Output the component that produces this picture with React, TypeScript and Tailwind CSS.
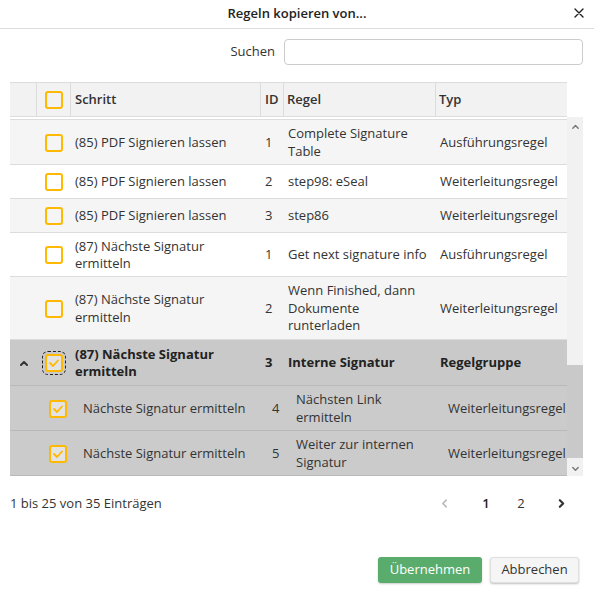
import React from 'react';

type Row = {
  step: string[];
  id: string;
  rule: string[];
  type: string;
  h: string;
  bg: string;
  kind: 'plain' | 'group' | 'child';
  checked?: boolean;
};

const rows: Row[] = [
  { step: ['(85) PDF Signieren lassen'], id: '1', rule: ['Complete Signature', 'Table'], type: 'Ausführungsregel', h: 'h-[45px]', bg: 'bg-[#f5f5f5]', kind: 'plain' },
  { step: ['(85) PDF Signieren lassen'], id: '2', rule: ['step98: eSeal'], type: 'Weiterleitungsregel', h: 'h-[34px]', bg: 'bg-white', kind: 'plain' },
  { step: ['(85) PDF Signieren lassen'], id: '3', rule: ['step86'], type: 'Weiterleitungsregel', h: 'h-[34px]', bg: 'bg-[#f5f5f5]', kind: 'plain' },
  { step: ['(87) Nächste Signatur', 'ermitteln'], id: '1', rule: ['Get next signature info'], type: 'Ausführungsregel', h: 'h-[44px]', bg: 'bg-white', kind: 'plain' },
  { step: ['(87) Nächste Signatur', 'ermitteln'], id: '2', rule: ['Wenn Finished, dann', 'Dokumente', 'runterladen'], type: 'Weiterleitungsregel', h: 'h-[63px]', bg: 'bg-[#f5f5f5]', kind: 'plain' },
  { step: ['(87) Nächste Signatur', 'ermitteln'], id: '3', rule: ['Interne Signatur'], type: 'Regelgruppe', h: 'h-[46px]', bg: 'bg-[#c9c9c9]', kind: 'group', checked: true },
  { step: ['Nächste Signatur ermitteln'], id: '4', rule: ['Nächsten Link', 'ermitteln'], type: 'Weiterleitungsregel', h: 'h-[45px]', bg: 'bg-[#cbcbcb]', kind: 'child', checked: true },
  { step: ['Nächste Signatur ermitteln'], id: '5', rule: ['Weiter zur internen', 'Signatur'], type: 'Weiterleitungsregel', h: 'h-[45px]', bg: 'bg-[#cbcbcb]', kind: 'child', checked: true },
];

function Checkbox({ checked, focused }: { checked?: boolean; focused?: boolean }) {
  return (
    <span
      className={
        'flex h-[18px] w-[18px] items-center justify-center rounded-[3px] border-2 border-[#ffb900] ' +
        (checked ? 'bg-[#e3e3e3] ' : '') +
        (focused ? 'outline outline-1 outline-dashed outline-[#222] outline-offset-[2px]' : '')
      }
    >
      {checked && (
        <svg width="12" height="12" viewBox="0 0 12 12" fill="none">
          <polyline points="2,6 5,9 10,3.5" stroke="#ffb900" strokeWidth="1.8" strokeLinecap="round" strokeLinejoin="round" />
        </svg>
      )}
    </span>
  );
}

function Chevron({ dir, color, size = 10, stroke = 1.8 }: { dir: 'up' | 'down' | 'left' | 'right'; color: string; size?: number; stroke?: number }) {
  const pts = {
    up: '2,7 5,4 8,7',
    down: '2,4 5,7 8,4',
    left: '6.5,2 3.5,5 6.5,8',
    right: '3.5,2 6.5,5 3.5,8',
  }[dir];
  return (
    <svg width={size} height={size} viewBox="0 0 10 10" fill="none">
      <polyline points={pts} stroke={color} strokeWidth={stroke} strokeLinecap="round" strokeLinejoin="round" />
    </svg>
  );
}

function Lines({ lines }: { lines: string[] }) {
  return (
    <div className="whitespace-nowrap">
      {lines.map((l, i) => (
        <div key={i}>{l}</div>
      ))}
    </div>
  );
}

export default function App() {
  return (
    <div className="h-[597px] w-[594px] bg-white text-[13px] leading-[17.5px] text-[#333] font-['Open_Sans',sans-serif]">
      {/* Titel */}
      <div className="relative flex h-[29px] items-center justify-center border-b border-[#dcdcdc]">
        <span className="font-semibold text-[#222]">Regeln kopieren von...</span>
        <button className="absolute right-[9px] top-[7px] text-[#222]">
          <svg width="12" height="12" viewBox="0 0 12 12" fill="none">
            <path d="M2 2 L10 10 M10 2 L2 10" stroke="#222" strokeWidth="1.4" strokeLinecap="round" />
          </svg>
        </button>
      </div>

      {/* Suche */}
      <div className="mt-[10px] flex items-center justify-end gap-[9px] pr-[11px]">
        <span className="text-[#333]">Suchen</span>
        <input className="h-[26px] w-[299px] rounded-[4px] border border-[#ccc] px-2 outline-none" />
      </div>

      {/* Tabelle */}
      <div className="ml-[10px] mt-[17px] w-[573px]">
        <div className="flex h-[35px] w-[557px] border-y border-[#dcdcdc] bg-[#f2f2f2] font-semibold">
          <div className="w-[27px] border-r border-[#dcdcdc]" />
          <div className="flex w-[34px] items-center justify-center border-r border-[#dcdcdc]">
            <Checkbox />
          </div>
          <div className="flex w-[190px] items-center border-r border-[#dcdcdc] pl-[4px]">Schritt</div>
          <div className="flex w-[23px] items-center border-r border-[#dcdcdc] pl-[4px]">ID</div>
          <div className="flex w-[152px] items-center border-r border-[#dcdcdc] pl-[3px]">Regel</div>
          <div className="flex flex-1 items-center pl-[3px]">Typ</div>
        </div>

        <div className="flex h-[359px]">
          <div className="mt-[2px] w-[557px] border-t border-[#dcdcdc]">
            {rows.map((r, i) => {
              const group = r.kind === 'group';
              const child = r.kind === 'child';
              const gray = group || child;
              return (
                <div
                  key={i}
                  className={
                    'flex items-center border-b pt-[1px] ' +
                    r.h + ' ' + r.bg + ' ' +
                    (gray ? 'border-[#b9b9b9] ' : 'border-[#dcdcdc] ') +
                    (group ? 'font-bold text-[#222]' : '')
                  }
                >
                  <div className="flex w-[27px] justify-center pl-[1px]">
                    {group && <Chevron dir="up" color="#333" size={10} stroke={2} />}
                  </div>
                  <div className={'flex w-[34px] ' + (child ? 'justify-start pl-[12px]' : 'justify-center')}>
                    <Checkbox checked={r.checked} focused={group} />
                  </div>
                  <div className={'w-[190px] ' + (child ? 'pl-[12px]' : 'pl-[4px]')}>
                    <Lines lines={r.step} />
                  </div>
                  <div className={'w-[23px] ' + (child ? 'pl-[11px]' : 'pl-[4px]')}>{r.id}</div>
                  <div className={'w-[152px] ' + (child ? 'pl-[12px]' : 'pl-[4px]')}>
                    <Lines lines={r.rule} />
                  </div>
                  <div className={'flex-1 whitespace-nowrap ' + (child ? 'pl-[12px]' : 'pl-[4px]')}>{r.type}</div>
                </div>
              );
            })}
          </div>

          {/* Scrollbar */}
          <div className="flex w-[16px] flex-col bg-[#f1f1f1]">
            <div className="flex h-[16px] items-center justify-center pt-[2px]">
              <Chevron dir="up" color="#777" size={9} stroke={1.6} />
            </div>
            <div className="h-[232px]" />
            <div className="h-[93px] bg-[#c9c9c9]" />
            <div className="flex-1" />
            <div className="flex h-[16px] items-center justify-center">
              <Chevron dir="down" color="#777" size={9} stroke={1.6} />
            </div>
          </div>
        </div>
      </div>

      {/* Fuss */}
      <div className="mt-[19px] flex items-center justify-between pl-[10px] pr-[23px]">
        <span>1 bis 25 von 35 Einträgen</span>
        <div className="flex items-center">
          <span className="flex w-[20px] justify-center">
            <Chevron dir="left" color="#bbb" size={11} stroke={1.6} />
          </span>
          <span className="ml-[22px] flex w-[20px] justify-center font-semibold text-[#222]">1</span>
          <span className="ml-[15px] flex w-[20px] justify-center">2</span>
          <span className="ml-[20px] flex w-[20px] justify-center">
            <Chevron dir="right" color="#333" size={11} stroke={2} />
          </span>
        </div>
      </div>

      <div className="mt-[44px] flex justify-end gap-[8px] pr-[15px]">
        <button className="h-[26px] w-[104px] rounded-[3px] bg-[#5aac6d] text-white shadow-[0_1px_2px_rgba(0,0,0,0.2)]">
          Übernehmen
        </button>
        <button className="h-[26px] w-[89px] rounded-[3px] border border-[#e0e0e0] bg-[#f5f5f5] text-[#333] shadow-[0_1px_2px_rgba(0,0,0,0.25)]">
          Abbrechen
        </button>
      </div>
    </div>
  );
}
